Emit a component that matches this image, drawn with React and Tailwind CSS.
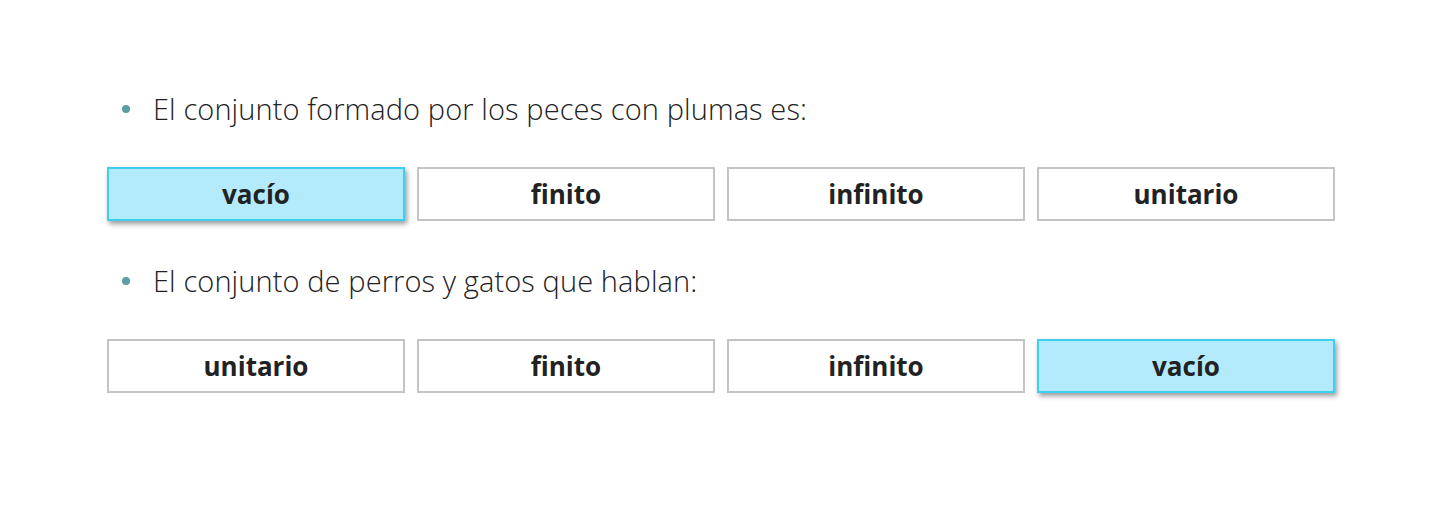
import React from "react";

const QUESTIONS = [
  {
    text: "El conjunto formado por los peces con plumas es:",
    options: ["vacío", "finito", "infinito", "unitario"],
    selected: 0,
  },
  {
    text: "El conjunto de perros y gatos que hablan:",
    options: ["unitario", "finito", "infinito", "vacío"],
    selected: 3,
  },
];

export default function App() {
  return (
    <div className="w-[1436px] h-[505px] bg-white pt-[89px] pl-[107px] font-['Open_Sans',sans-serif]">
      {QUESTIONS.map((q, qi) => (
        <div key={qi} className={qi > 0 ? "mt-[40px]" : ""}>
          <div className="flex items-center h-[40px] pl-[15px]">
            <span className="w-[8px] h-[8px] rounded-full bg-[#5b9fa3]" />
            <span className="ml-[23px] text-[29px] font-light text-[#222] tracking-[0.1px]">{q.text}</span>
          </div>
          <div className="mt-[38px] flex gap-[12px]">
            {q.options.map((o, oi) => {
              const sel = oi === q.selected;
              return (
                <button
                  key={oi}
                  className={`w-[298px] h-[54px] border-2 text-[26px] font-bold text-[#222] ${
                    sel
                      ? "bg-[#b3ebfd] border-[#3ccff1] shadow-[2px_3px_5px_rgba(0,0,0,0.4)]"
                      : "bg-white border-[#c4c4c4]"
                  }`}
                >
                  {o}
                </button>
              );
            })}
          </div>
        </div>
      ))}
    </div>
  );
}
